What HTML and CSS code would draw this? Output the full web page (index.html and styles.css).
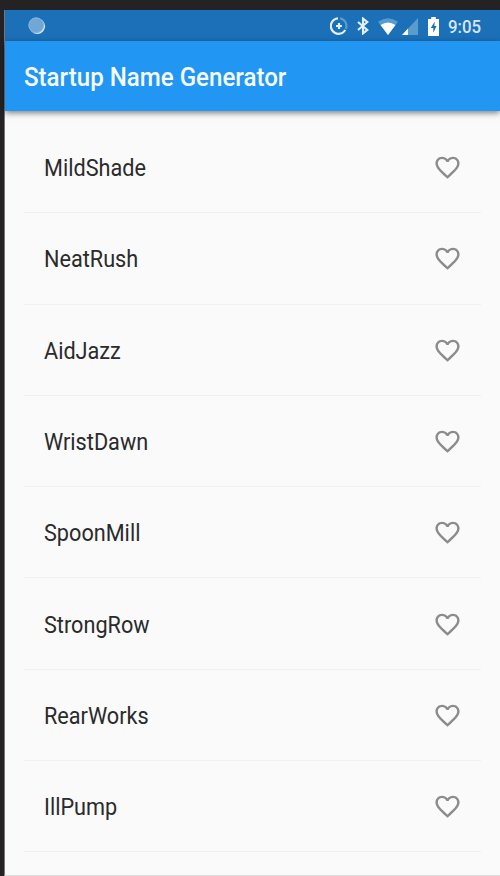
FILE: index.html
```html
<!DOCTYPE html>
<html lang="en">
<head>
<meta charset="utf-8">
<title>Startup Name Generator</title>
<link rel="stylesheet" href="styles.css">
</head>
<body>
<svg class="defs" aria-hidden="true">
  <symbol id="heart" viewBox="0 0 24 24"><path d="M16.5 3c-1.74 0-3.41.81-4.5 2.09C10.91 3.81 9.24 3 7.5 3 4.42 3 2 5.42 2 8.5c0 3.78 3.4 6.86 8.55 11.54L12 21.35l1.45-1.32C18.6 15.36 22 12.28 22 8.5 22 5.42 19.58 3 16.5 3zm-4.4 15.55l-.1.1-.1-.1C7.14 14.24 4 11.39 4 8.5 4 6.5 5.5 5 7.5 5c1.54 0 3.04.99 3.57 2.36h1.87C13.46 5.99 14.96 5 16.5 5c2 0 3.5 1.5 3.5 3.5 0 2.89-3.14 5.74-7.9 10.05z"/></symbol>
</svg>
<div class="phone">
  <header class="status">
    <svg class="notice" viewBox="0 0 18 18"><circle cx="9.3" cy="9.3" r="7.800" fill="#d5e8f5"/><circle cx="8.2" cy="8.2" r="7.7" fill="#70a7d5"/><circle cx="8.2" cy="8.2" r="7.3" fill="none" stroke="#86b5dc"/></svg>
    <svg class="saver" viewBox="0 0 18 18" fill="none" stroke="#e4f0f9" stroke-width="2.2"><path d="M10 1.4A7.7 7.7 0 0 1 15.8 12" stroke="#5b9bd0"/><path d="M8 1.4A7.7 7.7 0 1 0 15.2 13"/><path d="M9 6v6M6 9h6"/></svg>
    <svg class="bluetooth" viewBox="0 0 12 18" fill="none" stroke="#e4f0f9" stroke-width="2.1"><path d="M1 5l9.300 8L6 16.400V1.600L10.300 5 1 13"/></svg>
    <svg class="wifi" viewBox="0 0 20 17"><path d="M0 3.8Q10-3.2 20 3.8L10 17Z" fill="#579bd0"/><path d="M2.5 7Q10 2 17.500 7L10 17Z" fill="#fff"/></svg>
    <svg class="signal" viewBox="0 0 16 17"><path d="M16 0v17H0z" fill="#5b9bce"/><path d="M6 10.600V17H0z" fill="#fff"/></svg>
    <svg class="battery" viewBox="0 0 11 19"><path d="M3.200 0h4.600v2H11v17H0V2h3.200z" fill="#fff"/><path d="M6.800 4.500L2.800 11h2.500v4.800L8.500 9H6.300z" fill="#1b6fb5"/></svg>
    <span class="clock">9:05</span>
  </header>
  <div class="appbar"><h1>Startup Name Generator</h1></div>
  <ul class="names">
    <li><span>MildShade</span><svg class="heart"><use href="#heart"/></svg></li>
    <li><span>NeatRush</span><svg class="heart"><use href="#heart"/></svg></li>
    <li><span>AidJazz</span><svg class="heart"><use href="#heart"/></svg></li>
    <li><span>WristDawn</span><svg class="heart"><use href="#heart"/></svg></li>
    <li><span>SpoonMill</span><svg class="heart"><use href="#heart"/></svg></li>
    <li><span>StrongRow</span><svg class="heart"><use href="#heart"/></svg></li>
    <li><span>RearWorks</span><svg class="heart"><use href="#heart"/></svg></li>
    <li><span>IllPump</span><svg class="heart"><use href="#heart"/></svg></li>
  </ul>
</div>
</body>
</html>
```
FILE: styles.css
```css
* { box-sizing: border-box; }
body {
  margin: 0;
  height: 876px;
  padding: 10px 0 0 4px;
  overflow: hidden;
  background: #242222;
  font-family: Roboto, sans-serif;
}
.defs { display: none; }
.phone {
  height: 866px;
  display: flex;
  flex-direction: column;
  background: #fafafa;
  border-left: 1px solid #777;
  border-bottom: 1px solid #dcdcdc;
}
.status {
  height: 31px;
  flex: none;
  display: flex;
  align-items: center;
  padding: 1px 18px 0 23px;
  background: #1b70b7;
}
.status svg { flex: none; }
.notice { width: 18px; height: 18px; }
.saver { width: 18px; height: 18px; margin-left: auto; }
.bluetooth { width: 12px; height: 18px; margin-left: 9px; }
.wifi { width: 20px; height: 17px; margin-left: 9px; }
.signal { width: 16px; height: 17px; margin-left: 4px; }
.battery { width: 11px; height: 19px; margin-left: 10px; }
.clock {
  width: 34px;
  margin: 2px 0 0 9px;
  font-size: 18.500px;
  font-weight: 500;
  line-height: 20px;
  color: #d4e6f5;
  white-space: nowrap;
  transform: scaleX(.91);
  transform-origin: left;
}
.appbar {
  height: 70px;
  flex: none;
  display: flex;
  align-items: center;
  padding-left: 19px;
  background: #2196f3;
  box-shadow: 0 2px 6px rgba(0, 0, 0, .5);
}
h1 {
  margin: 4px 0 0;
  font-size: 25px;
  line-height: 30px;
  font-weight: 500;
  color: #f6fbff;
  transform: scaleX(.964);
  transform-origin: left;
}
.names {
  list-style: none;
  margin: 11px 19px 0 19px;
  padding: 0;
}
.names li {
  height: 91.300px;
  display: flex;
  align-items: center;
  justify-content: space-between;
  padding: 1px 19px 0 19.500px;
  border-bottom: 1px solid #f1f1f1;
  font-size: 23px;
  line-height: 28px;
  color: #2b2b2b;
}
.names span {
  margin-top: 3px;
  transform: scaleX(.942);
  transform-origin: left;
}
.heart { width: 29px; height: 29px; fill: #8c8c8c; }
```
